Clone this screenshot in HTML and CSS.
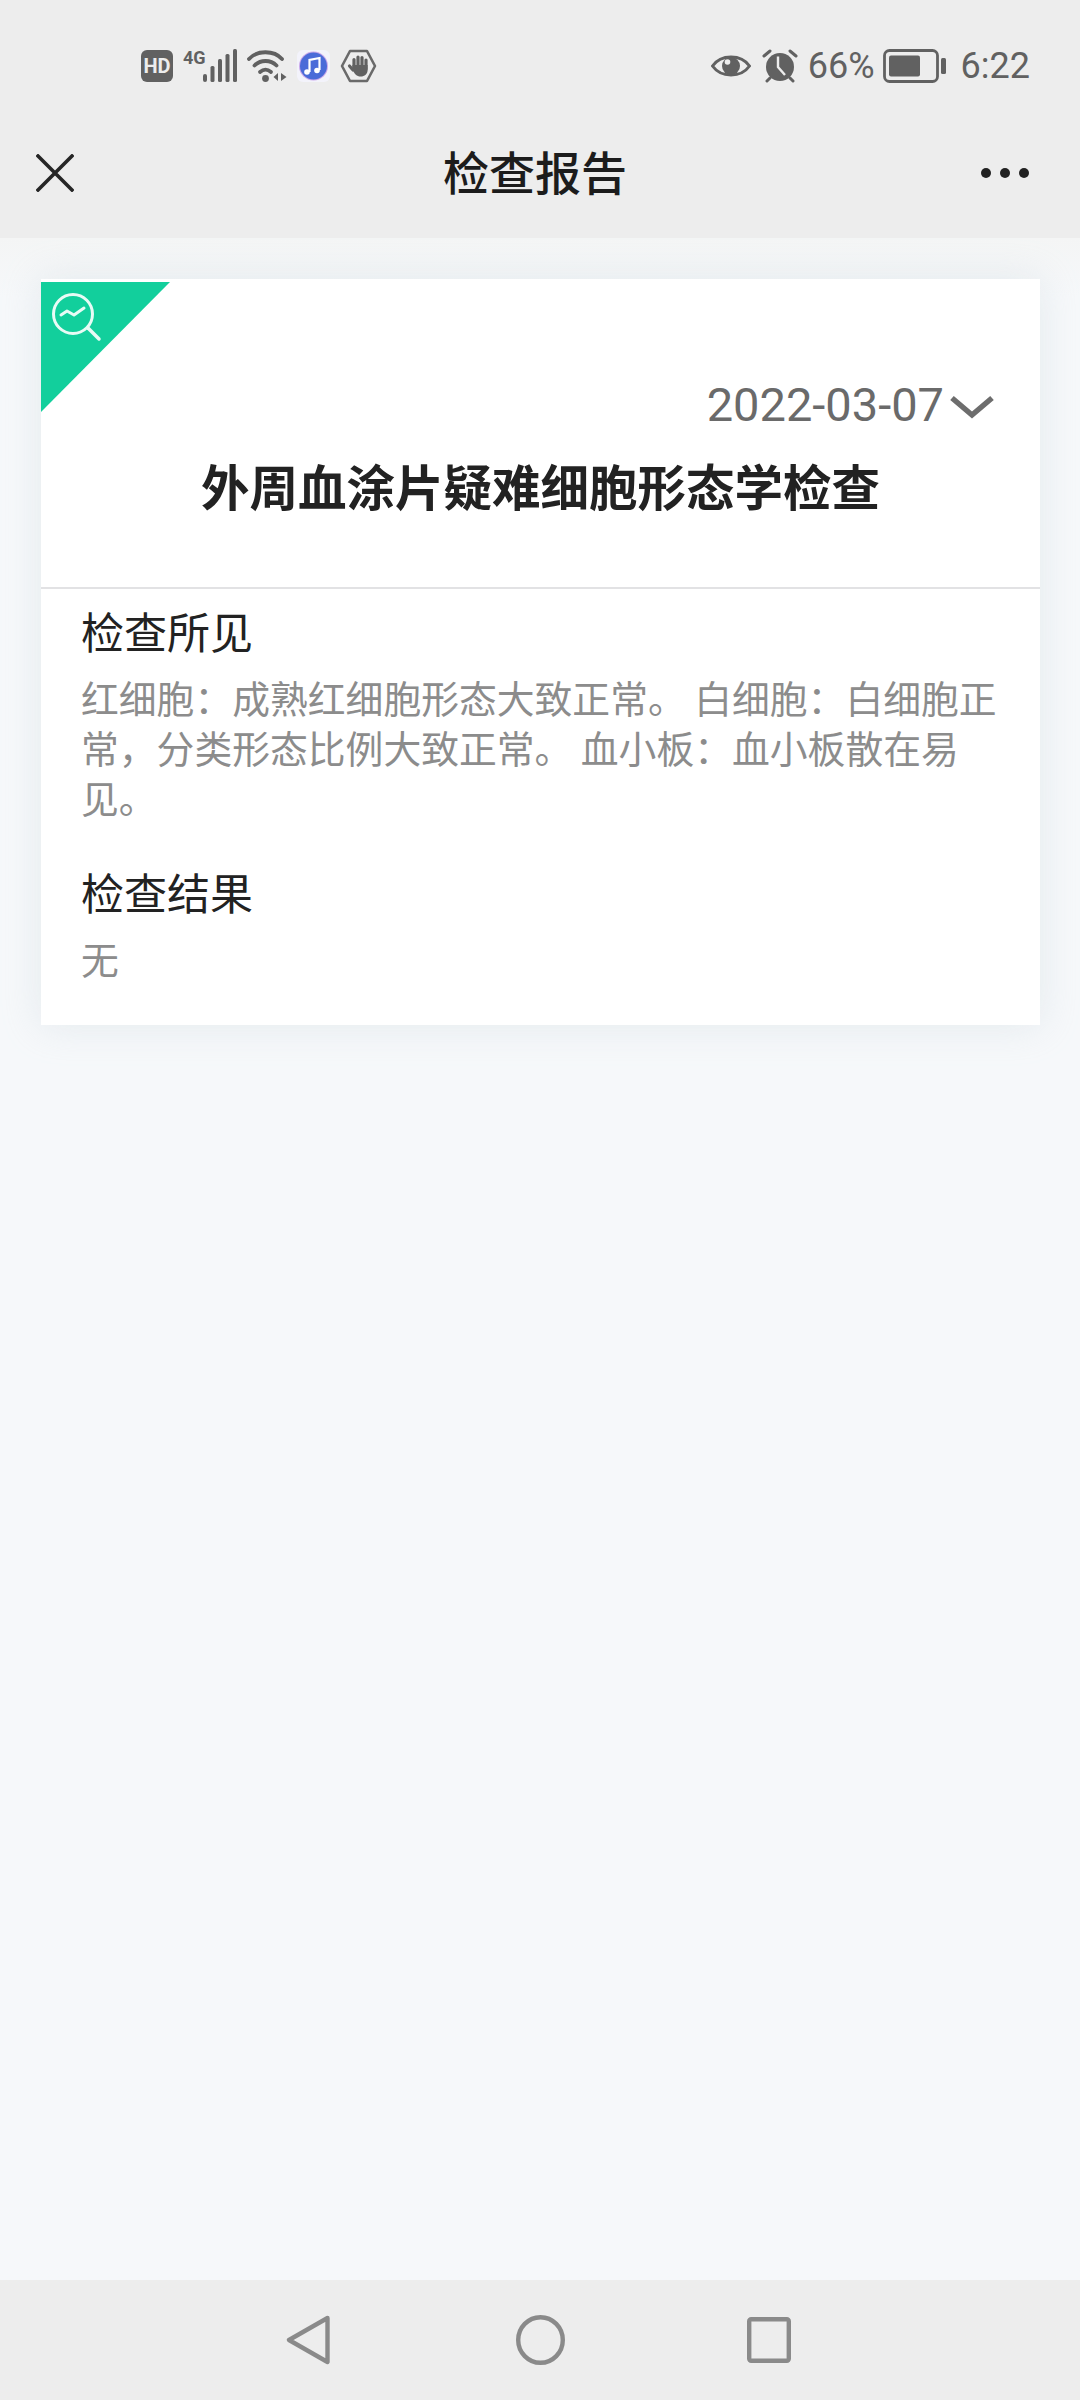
FILE: index.html
```html
<!DOCTYPE html>
<html lang="zh-CN">
<head>
<meta charset="utf-8">
<title>检查报告</title>
<link rel="stylesheet" href="styles.css">
</head>
<body>
<div class="screen">
  <header class="top">
    <div class="status">
      <div class="status-left">
        <svg width="32" height="32" viewBox="0 0 32 32"><rect width="32" height="32" rx="6" fill="#616161"/><text x="16" y="23" class="hd-text">HD</text></svg>
        <svg width="54" height="42" viewBox="0 -4 54 42"><text x="0" y="15" class="g-text">4G</text><g fill="#616161"><rect x="20" y="25" width="4" height="8" rx="2"/><rect x="27.500" y="17" width="4" height="16" rx="1.500"/><rect x="35" y="10" width="4" height="23" rx="1.500"/><rect x="42.500" y="5" width="4" height="28" rx="1.500"/><rect x="50" y="0" width="4" height="33" rx="1.500"/></g></svg>
        <svg width="40" height="34" viewBox="0 0 40 34"><g fill="none" stroke="#616161" stroke-width="3.800" stroke-linecap="round"><path d="M2 10C10 1 27 1 35 10"/><path d="M7.500 16.500C13.500 10.500 23.500 10.500 29.500 16.500"/><path d="M13 23C16.500 20 20.500 20 24 23"/></g><circle cx="18.500" cy="29.500" r="3.400" fill="#616161"/><path d="M31 24v8l-4.500-4zM34 24v8l5.500-4z" fill="#616161"/></svg>
        <svg width="33" height="32" viewBox="0 0 33 32"><rect width="33" height="32" rx="6" fill="#f3f3fb"/><circle cx="16.500" cy="16" r="14.500" fill="#c9a8ea"/><circle cx="16.500" cy="16" r="13.500" fill="#4a6bd8"/><path d="M12.500 22V10l10-2V20" fill="none" stroke="#fff" stroke-width="2.200"/><circle cx="10" cy="22" r="2.800" fill="#fff"/><circle cx="20" cy="20.500" r="2.800" fill="#fff"/></svg>
        <svg width="37" height="34" viewBox="0 0 37 34"><path d="M10 2h17l8 15-8 15H10L2 17z" fill="none" stroke="#6a6a6a" stroke-width="2.600" stroke-linejoin="round"/><g stroke="#616161" stroke-width="3.200" stroke-linecap="round"><path d="M14 18V10.500M18 18V8M22 18V8.500M26 20V11"/><path d="M9.500 17L13 21" /></g><path d="M12.400 16h15.200v5c0 4-3 6.500-7 6.500-4 0-6-2.500-8.200-7z" fill="#616161"/></svg>
      </div>
      <div class="status-right">
        <svg class="s-eye" width="40" height="26" viewBox="0 0 40 26"><path d="M1.500 13C10 1 30 1 38.500 13C30 25 10 25 1.500 13Z" fill="none" stroke="#616161" stroke-width="3"/><circle cx="20" cy="13" r="9" fill="#616161"/><circle cx="16.500" cy="9" r="2.800" fill="#ededed"/></svg>
        <svg class="s-clock" width="36" height="34" viewBox="0 0 36 34"><circle cx="18" cy="18" r="14" fill="#616161"/><path d="M2 7l6-5M34 7l-6-5M5 32l3-3M31 32l-3-3" stroke="#616161" stroke-width="3" stroke-linecap="round"/><path d="M16 7.500V18l7 8" fill="none" stroke="#ededed" stroke-width="2.400"/></svg>
        <span class="s-pct">66%</span>
        <svg class="s-batt" width="63" height="34" viewBox="0 0 63 34"><rect x="1.500" y="1.500" width="53" height="31" rx="5" fill="none" stroke="#616161" stroke-width="2.800"/><rect x="6" y="6.500" width="31" height="21" rx="2" fill="#616161"/><rect x="58" y="9" width="5" height="16" rx="1.500" fill="#616161"/></svg>
        <span class="s-time">6:22</span>
      </div>
    </div>
    <div class="nav">
      <svg class="nav-close" width="38" height="38" viewBox="0 0 38 38"><path d="M2 2L36 36M36 2L2 36" stroke="#262626" stroke-width="3.600" stroke-linecap="square"/></svg>
      <h1 class="nav-title">检查报告</h1>
      <div class="dots"><i></i><i></i><i></i></div>
    </div>
  </header>

  <main class="content">
    <section class="card">
      <div class="corner">
        <svg width="52" height="52" viewBox="0 0 52 52"><circle cx="21" cy="21" r="19.500" fill="none" stroke="#e8fbf5" stroke-width="3"/><path d="M9 22l6-4 7 4 10-7" fill="none" stroke="#e8fbf5" stroke-width="3" stroke-linecap="round" stroke-linejoin="round"/><path d="M36 35l11 11" stroke="#e8fbf5" stroke-width="3.500" stroke-linecap="round"/></svg>
      </div>
      <div class="card-head">
        <div class="date-row">
          <span class="date">2022-03-07</span>
          <svg class="chev" width="46" height="26" viewBox="0 0 46 26"><path d="M3 4L23 21L43 4" fill="none" stroke="#6d6d6d" stroke-width="5.500"/></svg>
        </div>
        <h2 class="exam-name">外周血涂片疑难细胞形态学检查</h2>
      </div>
      <div class="card-body">
        <h3 class="label">检查所见</h3>
        <p class="value">红细胞：成熟红细胞形态大致正常。 白细胞：白细胞正常，分类形态比例大致正常。 血小板：血小板散在易见。</p>
        <h3 class="label label-next">检查结果</h3>
        <p class="value">无</p>
      </div>
    </section>
  </main>

  <footer class="bottom">
    <svg class="nav-back" width="45" height="50" viewBox="0 0 45 50"><path d="M41.500 3L3 25L41.500 47Z" fill="none" stroke="#8a8a8a" stroke-width="4.400" stroke-linejoin="round"/></svg>
    <svg class="nav-home" width="49" height="50" viewBox="0 0 49 50"><ellipse cx="24.500" cy="25" rx="22.300" ry="22.800" fill="none" stroke="#8a8a8a" stroke-width="4.400"/></svg>
    <svg class="nav-recent" width="44" height="46" viewBox="0 0 44 46"><rect x="2.200" y="2.200" width="39.600" height="41.600" rx="2" fill="none" stroke="#8a8a8a" stroke-width="4.400"/></svg>
  </footer>
</div>
</body>
</html>
```

FILE: styles.css
```css
* { box-sizing: border-box; }
html, body { margin: 0; padding: 0; }
body {
  width: 1080px;
  height: 2400px;
  overflow: hidden;
  font-family: "Noto Sans CJK SC", "Noto Sans", sans-serif;
  background: #f6f8fa;
}
.screen { width: 1080px; height: 2400px; display: flex; flex-direction: column; }

.top { height: 238px; background: #ededed; flex: none; }
.status {
  height: 130px;
  padding: 44px 50px 0 141px;
  display: flex;
  justify-content: space-between;
  align-items: flex-start;
}
.status-left, .status-right { display: flex; align-items: center; height: 44px; }
.status-left { gap: 10px; }
.status-right { color: #616161; font-family: "Roboto", sans-serif; font-size: 36px; }
.hd-text { font: bold 20px "Roboto", sans-serif; fill: #ededed; text-anchor: middle; }
.g-text { font: bold 18px "Roboto", sans-serif; fill: #616161; }
.s-eye { margin-right: 11px; }
.s-clock { margin-right: 10px; }
.s-pct { margin-right: 8px; }
.s-batt { margin-right: 15px; }

.nav {
  height: 108px;
  padding: 24px 51px 0 36px;
  display: flex;
  align-items: flex-start;
  justify-content: space-between;
  position: relative;
}
.nav-title {
  margin: 0;
  position: absolute;
  left: 443px;
  top: 8px;
  font-size: 46px;
  line-height: 64px;
  font-weight: 500;
  color: #1c1c1c;
}
.dots { display: flex; gap: 9px; margin-top: 14px; }
.dots i { width: 10px; height: 10px; border-radius: 50%; background: #222; display: block; }

.content {
  flex: 1;
  padding: 41px 40px 0 41px;
  background: linear-gradient(#f4f5f5, #f6f8fa 60px);
}
.card {
  position: relative;
  background: #fff;
  height: 746px;
  box-shadow: 0 0 36px rgba(190, 205, 215, .32);
}
.corner {
  position: absolute;
  left: 0;
  top: 3px;
  width: 129px;
  height: 130px;
  background: #12cf9c;
  clip-path: polygon(0 0, 100% 0, 0 100%);
  padding: 11px 0 0 11px;
}
.corner svg { display: block; }
.card-head { height: 310px; border-bottom: 2px solid #e2e2e4; padding-top: 96px; }
.date-row { display: flex; justify-content: flex-end; align-items: center; padding-right: 45px; height: 60px; }
.date { font-family: "Roboto", sans-serif; font-size: 47px; color: #6a6a6a; line-height: 60px; margin-right: 5px; }
.chev { margin-top: 4px; filter: blur(.6px); }
.exam-name {
  margin: 18px 0 0;
  text-align: center;
  font-size: 48.500px;
  line-height: 64px;
  font-weight: 700;
  color: #222;
}
.card-body { padding: 0 36px 0 40px; }
.label { margin: 11px 0 0; font-size: 43px; line-height: 60px; font-weight: 400; color: #222; }
.label-next { margin-top: 39px; }
.value { margin: 12px 0 0; font-size: 37.800px; line-height: 50px; color: #8c8c8c; }

.bottom {
  height: 120px;
  flex: none;
  background: #ededed;
  display: flex;
  align-items: flex-start;
  padding: 35px 0 0 286px;
}
.nav-home { margin-left: 185px; }
.nav-recent { margin-left: 182px; margin-top: 2px; }
```
